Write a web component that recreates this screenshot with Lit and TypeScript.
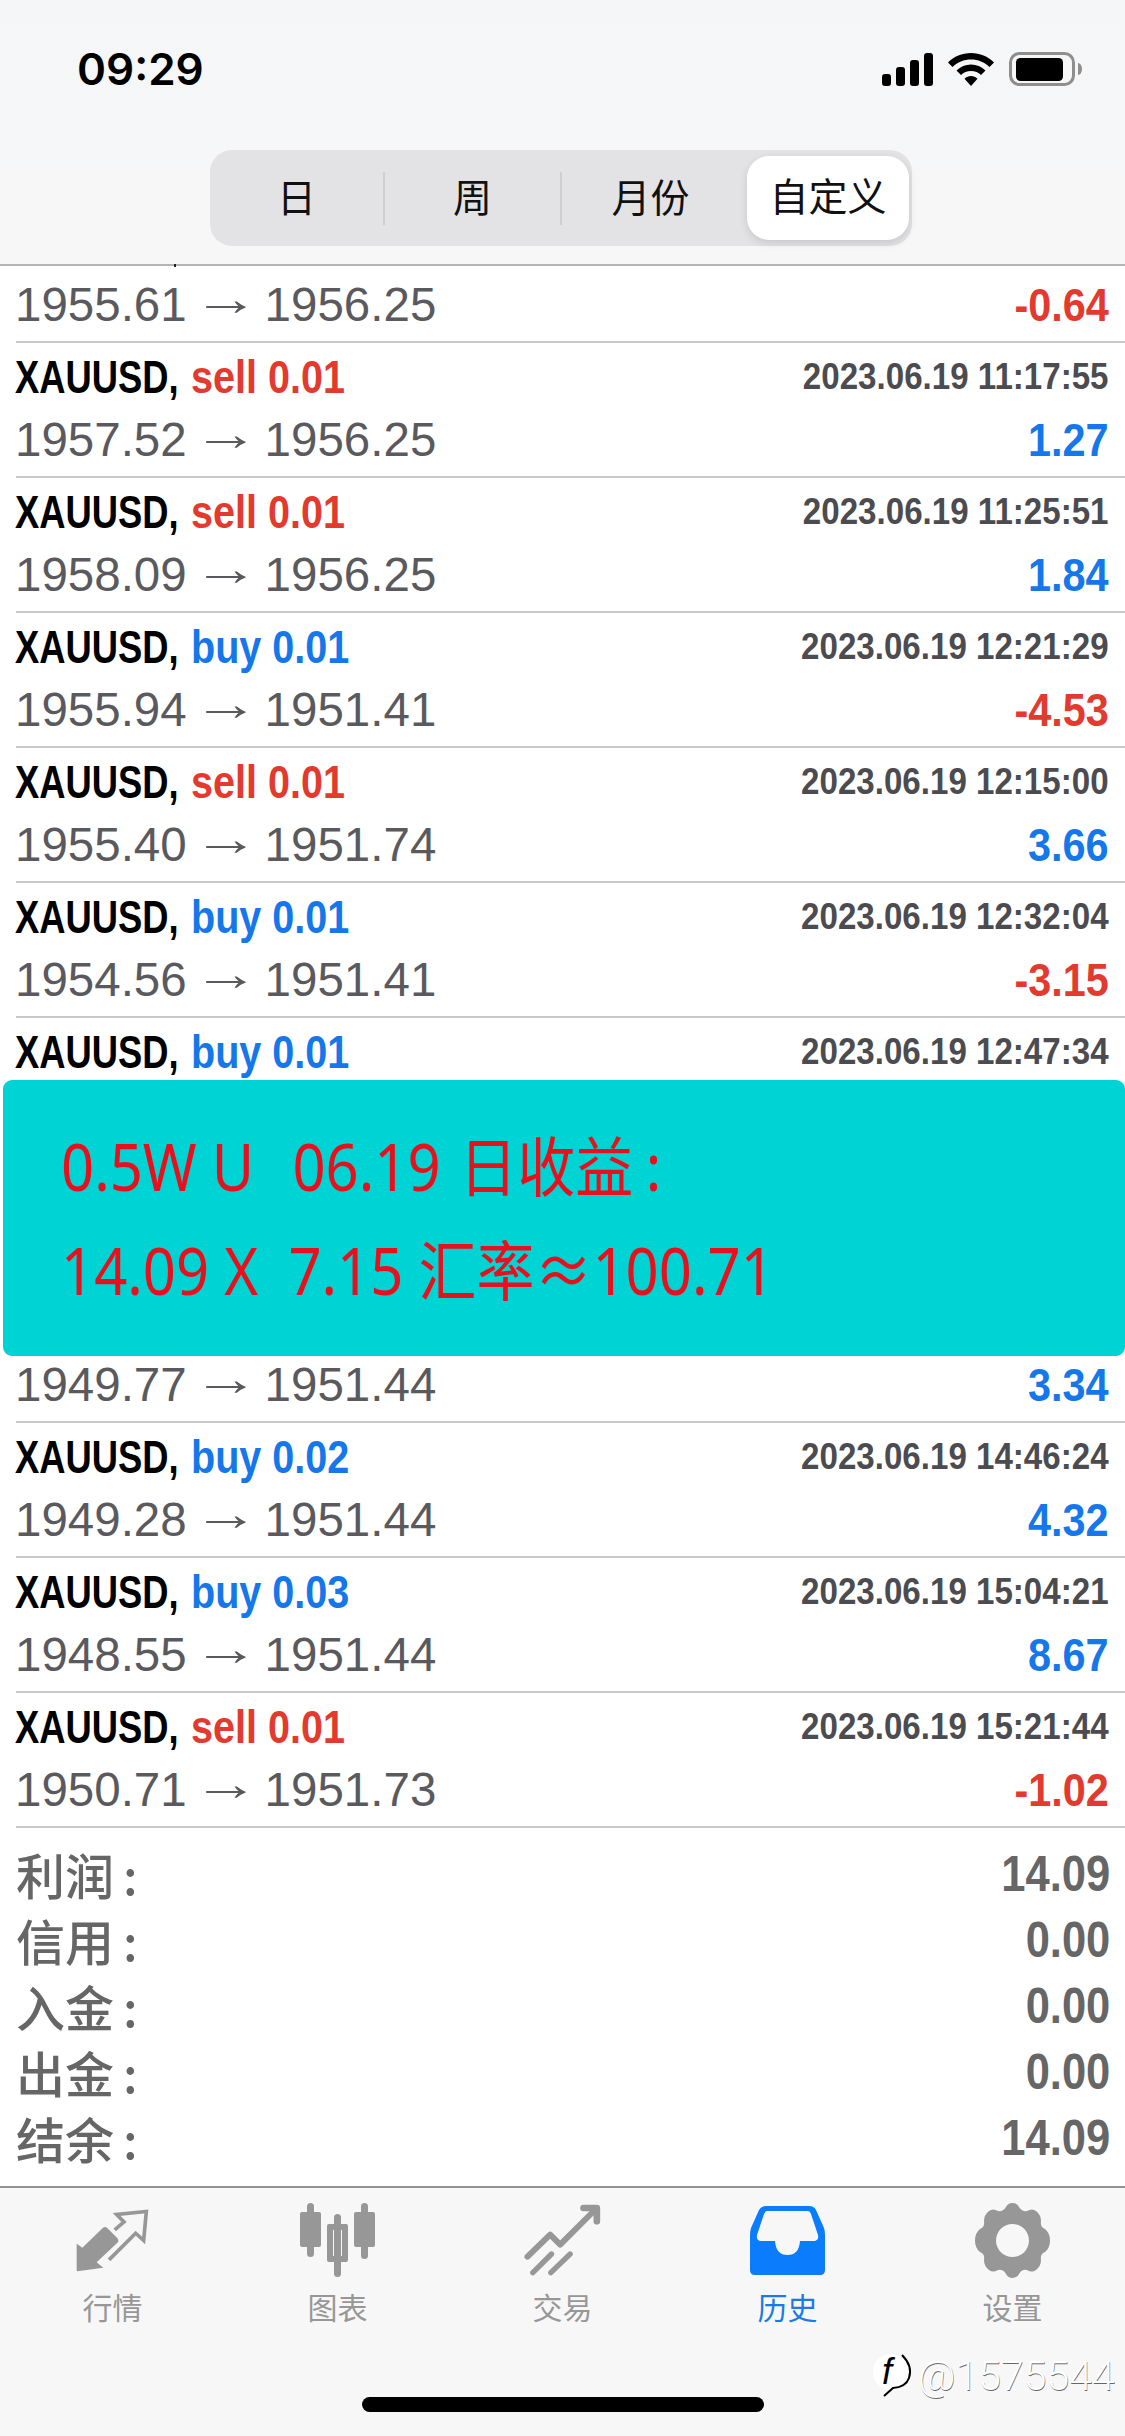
import { LitElement, html, css, svg } from 'lit';
import { customElement } from 'lit/decorators.js';

type Row = { side?: string; lot?: string; date?: string; from?: string; to?: string; pl?: string };

const rows: Row[] = [
  { from: '1955.61', to: '1956.25', pl: '-0.64' },
  { side: 'sell', lot: '0.01', date: '2023.06.19 11:17:55', from: '1957.52', to: '1956.25', pl: '1.27' },
  { side: 'sell', lot: '0.01', date: '2023.06.19 11:25:51', from: '1958.09', to: '1956.25', pl: '1.84' },
  { side: 'buy', lot: '0.01', date: '2023.06.19 12:21:29', from: '1955.94', to: '1951.41', pl: '-4.53' },
  { side: 'sell', lot: '0.01', date: '2023.06.19 12:15:00', from: '1955.40', to: '1951.74', pl: '3.66' },
  { side: 'buy', lot: '0.01', date: '2023.06.19 12:32:04', from: '1954.56', to: '1951.41', pl: '-3.15' },
  { side: 'buy', lot: '0.01', date: '2023.06.19 12:47:34' },
  {},
  { from: '1949.77', to: '1951.44', pl: '3.34' },
  { side: 'buy', lot: '0.02', date: '2023.06.19 14:46:24', from: '1949.28', to: '1951.44', pl: '4.32' },
  { side: 'buy', lot: '0.03', date: '2023.06.19 15:04:21', from: '1948.55', to: '1951.44', pl: '8.67' },
  { side: 'sell', lot: '0.01', date: '2023.06.19 15:21:44', from: '1950.71', to: '1951.73', pl: '-1.02' },
];

const summary = [
  ['利润', '14.09'],
  ['信用', '0.00'],
  ['入金', '0.00'],
  ['出金', '0.00'],
  ['结余', '14.09'],
];

const tabIcons = [
  svg`<path d="M47 222 Q44 222 45 215 L45 140 L62 152 L124 92 Q130 87 136 92 L168 124 Q172 130 168 136 L105 195 L125 212 Z" stroke="none"/>
      <path d="M159 98 L187 74 L165 52 L254 43 L246 130 L222 108 L142 188" fill="none" class="stroke"/>`,
  svg`<rect x="306" y="2206" width="7" height="54" rx="3.500"/>
      <rect x="299" y="2215" width="21" height="35" rx="2"/>
      <rect x="360" y="2206" width="7" height="56" rx="3.500"/>
      <rect x="353" y="2215" width="21" height="35" rx="2"/>
      <rect x="333" y="2217" width="7" height="63" rx="3.500"/>
      <path fill-rule="evenodd" d="M328 2227 H345 a2 2 0 0 1 2 2 V2263 a2 2 0 0 1 -2 2 H328 a2 2 0 0 1 -2 -2 V2229 a2 2 0 0 1 2 -2 Z M332 2233 V2259 H341 V2233 Z"/>`,
  svg`<g fill="none" stroke-linecap="round" stroke-linejoin="round" class="trade">
        <path d="M50 178 L118 112 L148 142 L255 35" stroke-width="18"/>
        <path d="M218 32 H258 V72" stroke-width="20"/>
        <path d="M66 226 L122 170" stroke-width="16"/>
        <path d="M120 226 L178 170" stroke-width="16"/>
      </g>`,
  svg`<path fill-rule="evenodd" d="M16 0 H59 Q64 0 66 4 L74 22 Q75 25 75 29 V64 Q75 69 70 69 H5 Q0 69 0 64 V29 Q0 25 1 22 L9 4 Q11 0 16 0 Z
      M17 5 Q15 5 14 8 L7 29 Q6 34 10 35 H25 Q26 49 37.500 49 Q49 49 50 35 H65 Q69 34 68 29 L61 8 Q60 5 58 5 Z"/>`,
  svg`<path fill-rule="evenodd" d="M37.500 0 Q42 0 44 4 Q47 9 52 8 Q57 5 61 8 Q66 12 66 18 Q65 24 70 26 Q75 30 75 37.500 Q75 45 70 49 Q65 51 66 57 Q66 63 61 67 Q57 70 52 67 Q47 66 44 71 Q42 75 37.500 75 Q33 75 31 71 Q28 66 23 67 Q18 70 14 67 Q9 63 9 57 Q10 51 5 49 Q0 45 0 37.500 Q0 30 5 26 Q10 24 9 18 Q9 12 14 8 Q18 5 23 8 Q28 9 31 4 Q33 0 37.500 0 Z M37.500 21 A16.500 16.500 0 1 0 37.500 54 A16.500 16.500 0 1 0 37.500 21 Z"/>`,
];

const tabs = [
  { label: '行情', w: 75, h: 67, vb: '40 30 225 200' },
  { label: '图表', w: 77, h: 76, vb: '298 2205 77 76' },
  { label: '交易', w: 77, h: 72, vb: '40 20 230 216' },
  { label: '历史', w: 75, h: 69, vb: '0 0 75 69', active: true },
  { label: '设置', w: 75, h: 75, vb: '0 0 75 75' },
];

@customElement('app-root')
export class AppRoot extends LitElement {
  static styles = css`
    :host {
      display: block;
      width: 1125px;
      height: 2436px;
      position: relative;
      overflow: hidden;
      background: #fff;
      font-family: 'Liberation Sans', 'Noto Sans CJK SC', sans-serif;
    }
    .page {
      display: flex;
      flex-direction: column;
      height: 2436px;
    }
    .head {
      height: 266px;
      flex: none;
      box-sizing: border-box;
      background: linear-gradient(180deg, #f5f6f7, #f7f7f8);
      border-bottom: 2px solid #b4b4b6;
      display: flex;
      flex-direction: column;
      align-items: flex-start;
    }
    .status {
      width: 100%;
      box-sizing: border-box;
      height: 150px;
      padding: 43px 43px 0 77px;
      display: flex;
      justify-content: space-between;
      align-items: flex-start;
    }
    .time {
      font: 600 44px/52px Inter, sans-serif;
      color: #000;
    }
    .status-icons {
      display: flex;
      gap: 15px;
      align-items: center;
      padding-top: 9px;
    }
    .seg {
      margin-left: 210px;
      width: 702px;
      height: 96px;
      border-radius: 22px;
      background: #e3e3e5;
      display: grid;
      grid-template-columns: 175px 177px 177px 173px;
      align-items: center;
    }
    .seg div {
      height: 53px;
      line-height: 53px;
      text-align: center;
      font-size: 39px;
      color: #111;
      border-right: 2px solid #cfcfd2;
      box-sizing: border-box;
    }
    .seg div.noline { border-right: none; }
    .seg div.on {
      height: 84px;
      line-height: 84px;
      margin: 0 3px 0 8px;
      background: #fff;
      border: none;
      border-radius: 22px;
      box-shadow: 0 3px 8px rgba(0, 0, 0, 0.12);
    }
    .tail {
      position: absolute;
      left: 174px;
      top: 264px;
      width: 2px;
      height: 3px;
      background: #222;
    }
    .list {
      flex: 1;
      overflow: hidden;
    }
    .rows { margin-top: -58px; }
    .row {
      height: 135px;
      box-sizing: border-box;
      margin-left: 16px;
      padding: 0 16px 0 0;
      border-bottom: 2px solid #c9c9cb;
      display: flex;
      flex-direction: column;
    }
    .line {
      height: 66px;
      margin-left: -1px;
      display: flex;
      justify-content: space-between;
      align-items: center;
    }
    .line.top { margin-top: 1px; }
    .line.bottom { margin-top: -3px; }
    .sym {
      display: flex;
      font: 700 46px/66px 'Liberation Sans', sans-serif;
      color: #000;
      white-space: nowrap;
    }
    .name {
      width: 176px;
      flex: none;
      transform: scaleX(0.79);
      transform-origin: left center;
    }
    .side {
      width: 154px;
      flex: none;
      transform: scaleX(0.86);
      transform-origin: left center;
    }
    .sell { color: #e23a2e; }
    .buy { color: #1577ea; }
    .date {
      font: 700 37px/66px 'Liberation Sans', sans-serif;
      color: #4b4b50;
      white-space: nowrap;
      transform: scaleX(0.895);
      transform-origin: right center;
    }
    .price {
      font-size: 47.500px;
      line-height: 66px;
      color: #5a5a5e;
      word-spacing: 2px;
      white-space: nowrap;
    }
    .arrow {
      display: inline-block;
      transform: translateY(-6px) scaleX(1.4);
    }
    .pl {
      font: 700 46px/66px 'Liberation Sans', sans-serif;
      transform: scaleX(0.9);
      transform-origin: right center;
    }
    .sum {
      padding: 13px 15px 0 16px;
      display: flex;
      flex-direction: column;
    }
    .sum-row {
      height: 66px;
      display: flex;
      justify-content: space-between;
      align-items: center;
      color: #666;
    }
    .sum-row b {
      font: 700 50px/66px 'Liberation Sans', sans-serif;
      transform: scaleX(0.87);
      transform-origin: right center;
    }
    .sum-row span {
      font: 500 49px/66px 'Noto Sans CJK SC', sans-serif;
    }
    .colon {
      font-style: normal;
      margin-left: 9px;
    }
    .tabbar {
      height: 250px;
      flex: none;
      background: #f7f7f7;
      border-top: 2px solid #929294;
      box-sizing: border-box;
      display: flex;
      flex-direction: column;
    }
    .tabs { display: flex; height: 140px; }
    .tab {
      flex: 1;
      display: flex;
      flex-direction: column;
      align-items: center;
      color: #979797;
      font-size: 30px;
      font-family: 'Noto Sans CJK SC', sans-serif;
    }
    .tab.active { color: #1a7ae6; }
    .ico {
      height: 92px;
      margin-bottom: 2px;
      display: flex;
      align-items: center;
      justify-content: center;
      margin-top: 10px;
    }
    .ico svg { fill: #979797; }
    .ico .stroke { stroke: #979797; stroke-width: 11; stroke-miterlimit: 8; }
    .ico .trade { stroke: #979797; }
    .active .ico svg { fill: #0a7cfc; }
    .home {
      width: 402px;
      height: 15px;
      border-radius: 8px;
      background: #000;
      margin: 69px 0 0 362px;
    }
    .banner {
      position: absolute;
      left: 3px;
      right: 0;
      top: 1080px;
      height: 276px;
      box-sizing: border-box;
      padding: 34px 0 0 58px;
      border-radius: 9px;
      background: #00d3d3;
      color: #e8101c;
      font: 400 65px/104px 'Noto Sans', 'Noto Sans CJK SC', sans-serif;
    }
    .banner div {
      width: max-content;
      white-space: pre;
      transform: scaleX(0.892);
      transform-origin: left center;
    }
    .banner .gap {
      padding: 0 4px 0 9px;
    }
    .banner .colon { margin-left: 14px; }
    .mark {
      position: absolute;
      left: 873px;
      top: 2353px;
      height: 46px;
      display: flex;
      align-items: center;
      gap: 1px;
      font: 300 41px/44px Roboto, sans-serif;
      color: #fff;
      text-shadow: 0.5px 1px 0 #666;
    }
    .mark-logo {
      position: relative;
      width: 44px;
      height: 48px;
      flex: none;
    }
    .mark-logo i {
      position: absolute;
      left: 9px;
      top: 1px;
      font: italic 400 36px/38px 'Liberation Sans', sans-serif;
      color: #000;
      text-shadow: none;
    }
  `;

  render() {
    return html`
      <div class="page">
        <div class="head">
          <div class="status">
            <div class="time">09:29</div>
            <div class="status-icons">
              <svg width="51" height="33" viewBox="0 0 51 33" fill="#000">
                <rect x="0" y="21" width="9" height="12" rx="3" />
                <rect x="14" y="14" width="9" height="19" rx="3" />
                <rect x="28" y="7" width="9" height="26" rx="3" />
                <rect x="42" y="0" width="9" height="33" rx="3" />
              </svg>
              <svg width="46" height="33" viewBox="0 0 46 33" fill="#000">
                <path d="M23 0 C32 0 40 3.500 46 9.500 L41.500 14 C36.500 9 30 6.500 23 6.500 C16 6.500 9.500 9 4.500 14 L0 9.500 C6 3.500 14 0 23 0 Z" />
                <path d="M23 11.500 C28.500 11.500 33.500 13.500 37.500 17.500 L33 22 C30.500 19.500 27 18 23 18 C19 18 15.500 19.500 13 22 L8.500 17.500 C12.500 13.500 17.500 11.500 23 11.500 Z" />
                <path d="M23 23 C25.500 23 27.500 24 29.500 25.800 L23 33 L16.500 25.800 C18.500 24 20.500 23 23 23 Z" />
              </svg>
              <svg width="73" height="34" viewBox="0 0 73 34">
                <rect x="1.500" y="1.500" width="63" height="31" rx="9" fill="none" stroke="#8e8e8e" stroke-width="3" />
                <rect x="7" y="6" width="47" height="23" rx="4.500" fill="#000" />
                <path d="M69 11 a4 6 0 0 1 0 12 Z" fill="#8e8e8e" />
              </svg>
            </div>
          </div>
          <div class="seg">
            <div>日</div>
            <div>周</div>
            <div class="noline">月份</div>
            <div class="on">自定义</div>
          </div>
        </div>
        <div class="list">
          <div class="rows">${rows.map((r) => this.renderRow(r))}</div>
          <div class="sum">
            ${summary.map(
              ([k, v]) => html`<div class="sum-row"><span>${k}<i class="colon">:</i></span><b>${v}</b></div>`
            )}
          </div>
        </div>
        <div class="tabbar">
          <div class="tabs">
            ${tabs.map(
              (t, i) => html`
                <div class="tab ${t.active ? 'active' : ''}">
                  <div class="ico">
                    <svg width=${t.w} height=${t.h} viewBox=${t.vb}>${tabIcons[i]}</svg>
                  </div>
                  <div>${t.label}</div>
                </div>
              `
            )}
          </div>
          <div class="home"></div>
        </div>
      </div>
      <div class="tail"></div>
      <div class="banner">
        <div>0.5W U <span class="gap"> 06.19 </span>日收益<i class="colon">:</i></div>
        <div>14.09 X  7.15 汇率≈100.71</div>
      </div>
      <div class="mark">
        <div class="mark-logo">
          <svg width="44" height="48" viewBox="0 0 44 48">
            <circle cx="18" cy="20" r="18" fill="#fff" />
            <path d="M29 3 Q40 14 36 26 Q33 35 20 36 L11 44" fill="none" stroke="#000" stroke-width="2" />
          </svg>
          <i>f</i>
        </div>
        <span>@1575544</span>
      </div>
    `;
  }

  renderRow(r: Row) {
    return html`
      <div class="row">
        <div class="line top">
          ${r.side
            ? html`<div class="sym">
                  <span class="name">XAUUSD,</span>
                  <span class="side ${r.side}">${r.side} ${r.lot}</span>
                </div>
                <div class="date">${r.date}</div>`
            : ''}
        </div>
        <div class="line bottom">
          ${r.from
            ? html`<div class="price">${r.from} <span class="arrow">→</span> ${r.to}</div>
                <div class="pl ${r.pl!.startsWith('-') ? 'sell' : 'buy'}">${r.pl}</div>`
            : ''}
        </div>
      </div>
    `;
  }
}
